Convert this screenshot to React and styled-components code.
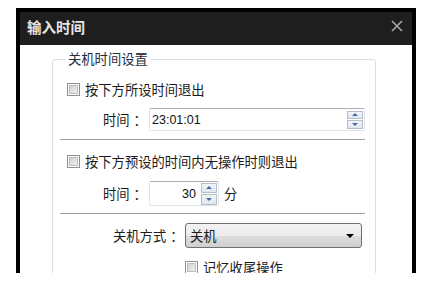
import React from "react";
import styled, { createGlobalStyle } from "styled-components";

const GlobalStyle = createGlobalStyle`
  html, body {
    margin: 0;
    padding: 0;
    background: #ffffff;
  }
  body {
    font-family: "Noto Sans CJK SC", "Liberation Sans", sans-serif;
    font-size: 13.3px;
    color: #1b1b1b;
  }
`;

const Page = styled.div`
  padding: 8px 0 0 16px;
`;

const Window = styled.div`
  width: 392px;
  height: 261px;
  border: 4px solid #000;
  border-bottom: 0;
  overflow: hidden;
  background: #fff;
`;

const TitleBar = styled.div`
  height: 33px;
  background: #1e1e1e;
  display: flex;
  align-items: center;
  justify-content: space-between;
  padding: 0 9px 5px 7px;
  box-sizing: border-box;
`;

const Title = styled.div`
  color: #e6e6e6;
  font-size: 14.5px;
  font-weight: 700;
`;

const Close = styled.div`
  width: 12px;
  height: 12px;
  display: flex;
`;

const Body = styled.div`
  padding: 6px 36px 0 32px;
`;

const Group = styled.fieldset`
  margin: 0;
  padding: 4px 10px 20px 7px;
  border: 1px solid #d5dfe5;
  border-radius: 3px;
  min-width: 0;
`;

const Legend = styled.legend`
  padding: 0 3px;
  margin-left: 5px;
  line-height: 16px;
  color: #1e2b40;
`;

const Row = styled.div`
  display: flex;
  align-items: center;
  height: ${(p) => p.$h || 20}px;
  margin-top: ${(p) => p.$mt || 0}px;
  padding-left: ${(p) => p.$pl || 0}px;
`;

const Check = styled.span`
  width: 13px;
  height: 13px;
  box-sizing: border-box;
  border: 1px solid #8e8f8f;
  background: #fff;
  padding: 1px;
  display: inline-flex;
  margin-right: 5px;
  &::before {
    content: "";
    flex: 1;
    background: linear-gradient(135deg, #cfcfcf, #f2f2f2);
    border: 1px solid #bdbdbd;
  }
`;

const Label = styled.span`
  white-space: nowrap;
`;

const FieldLabel = styled.span`
  width: ${(p) => p.$w}px;
  white-space: nowrap;
  display: flex;
`;

const Colon = styled.span`
  margin-left: 4px;
`;

const Input = styled.div`
  width: ${(p) => p.$w}px;
  height: ${(p) => p.$h}px;
  box-sizing: border-box;
  border: 1px solid #dfe4ea;
  border-top-color: #abadb3;
  border-radius: 2px;
  display: flex;
  align-items: center;
  justify-content: ${(p) => (p.$right ? "flex-end" : "space-between")};
  padding: 0 1px 0 2px;
  font-family: "Liberation Sans", Arial, sans-serif;
  font-size: 12.5px;
  color: #111;
`;

const Value = styled.span`
  margin-right: ${(p) => p.$mr || 0}px;
`;

const Spinner = styled.div`
  width: 16px;
  height: ${(p) => p.$h}px;
  display: flex;
  flex-direction: column;
  gap: 1px;
`;

const SpinBtn = styled.div`
  flex: 1;
  border: 1px solid #b5bfca;
  background: linear-gradient(#f3f6f9, #dfe6ee);
  display: flex;
  align-items: center;
  justify-content: center;
  &::after {
    content: "";
    border-left: 3px solid transparent;
    border-right: 3px solid transparent;
    ${(p) =>
      p.$down
        ? "border-top: 3px solid #4a6aa0;"
        : "border-bottom: 3px solid #4a6aa0;"}
  }
`;

const Unit = styled.span`
  margin-left: 5px;
`;

const Separator = styled.div`
  height: 1px;
  background: #a0a0a0;
  margin-top: ${(p) => p.$mt}px;
`;

const Select = styled.div`
  width: 177px;
  height: 25px;
  box-sizing: border-box;
  border: 1px solid #707070;
  border-radius: 3px;
  background: linear-gradient(#f3f3f3 0%, #ebebeb 50%, #dddddd 51%, #cfcfcf 100%);
  display: flex;
  align-items: center;
  justify-content: space-between;
  padding: 0 7px 0 4px;
  &::after {
    content: "";
    border-left: 4px solid transparent;
    border-right: 4px solid transparent;
    border-top: 4px solid #000;
  }
`;

function SpinBox({ h }) {
  return (
    <Spinner $h={h}>
      <SpinBtn />
      <SpinBtn $down />
    </Spinner>
  );
}

export default function App() {
  return (
    <>
      <GlobalStyle />
      <Page>
        <Window>
          <TitleBar>
            <Title>输入时间</Title>
            <Close>
              <svg width="12" height="12" viewBox="0 0 12 12">
                <path d="M1 1 L11 11 M11 1 L1 11" stroke="#a8a8a8" strokeWidth="1.6" />
              </svg>
            </Close>
          </TitleBar>
          <Body>
            <Group>
              <Legend>关机时间设置</Legend>
              <Row $mt={8} $pl={7}>
                <Check />
                <Label>按下方所设时间退出</Label>
              </Row>
              <Row $h={23} $mt={9} $pl={43}>
                <FieldLabel $w={46}>
                  时间<Colon>：</Colon>
                </FieldLabel>
                <Input $w={216} $h={23}>
                  <Value>23:01:01</Value>
                  <SpinBox h={18} />
                </Input>
              </Row>
              <Separator $mt={8} />
              <Row $mt={11} $pl={7}>
                <Check />
                <Label>按下方预设的时间内无操作时则退出</Label>
              </Row>
              <Row $h={25} $mt={10} $pl={43}>
                <FieldLabel $w={46}>
                  时间<Colon>：</Colon>
                </FieldLabel>
                <Input $w={70} $h={25} $right>
                  <Value $mr={5}>30</Value>
                  <SpinBox h={22} />
                </Input>
                <Unit>分</Unit>
              </Row>
              <Separator $mt={7} />
              <Row $h={25} $mt={9} $pl={53}>
                <FieldLabel $w={72}>
                  关机方式<Colon>：</Colon>
                </FieldLabel>
                <Select>关机</Select>
              </Row>
              <Row $mt={9} $pl={125}>
                <Check />
                <Label>记忆收尾操作</Label>
              </Row>
            </Group>
          </Body>
        </Window>
      </Page>
    </>
  );
}
